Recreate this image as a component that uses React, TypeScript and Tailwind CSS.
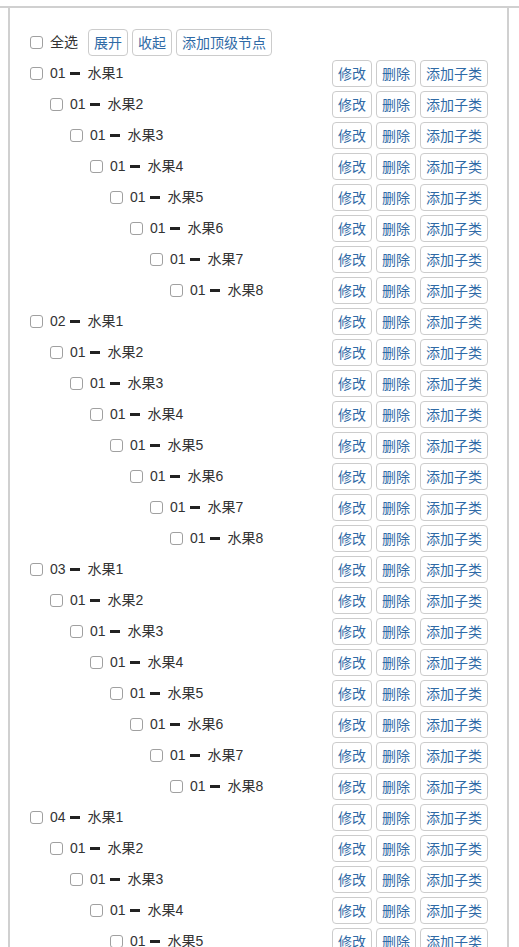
import React from "react"

type Row = { id: string; name: string; level: number }

const groups = ["01", "02", "03", "04"]

const rows: Row[] = groups.flatMap((g) =>
  Array.from({ length: 8 }, (_, i) => ({
    id: i === 0 ? g : "01",
    name: `水果${i + 1}`,
    level: i,
  }))
)

const indent = [
  "pl-0",
  "pl-[20px]",
  "pl-[40px]",
  "pl-[60px]",
  "pl-[80px]",
  "pl-[100px]",
  "pl-[120px]",
  "pl-[140px]",
]

function Box() {
  return (
    <input
      type="checkbox"
      className="appearance-none w-[13px] h-[13px] border border-[#a0a0a0] rounded-[3px] bg-white shrink-0"
    />
  )
}

function Btn({ children }: { children: React.ReactNode }) {
  return (
    <button className="h-[27px] px-[5px] border border-[#ccc] rounded-[4px] bg-white text-[#2f6aa6] text-[14px] leading-none">
      {children}
    </button>
  )
}

export default function App() {
  return (
    <div className="pt-[6px] font-['Liberation_Sans','Noto_Sans_CJK_SC',sans-serif] text-[14px] text-[#333]">
      <div className="border-t-2 border-[#d0d0d0]">
        <div className="mx-[8px] w-[501px] border-x-2 border-[#d0d0d0] pl-[20px] pr-[19px] pt-[21px]">
          <div className="flex items-center h-[27px] mb-[4px]">
            <Box />
            <span className="ml-[7px] mr-[10px]">全选</span>
            <div className="flex gap-[4px]">
              <Btn>展开</Btn>
              <Btn>收起</Btn>
              <Btn>添加顶级节点</Btn>
            </div>
          </div>
          {rows.map((r, i) => (
            <div key={i} className="flex items-center justify-between h-[27px] mb-[4px]">
              <div className={`flex items-center ${indent[r.level]}`}>
                <Box />
                <span className="ml-[7px] flex items-center">
                  {r.id}
                  <span aria-hidden className="inline-block w-[10px] h-[3px] bg-[#222] ml-[4px] mr-[8px]" />
                  {r.name}
                </span>
              </div>
              <div className="flex gap-[4px]">
                <Btn>修改</Btn>
                <Btn>删除</Btn>
                <Btn>添加子类</Btn>
              </div>
            </div>
          ))}
        </div>
      </div>
    </div>
  )
}
